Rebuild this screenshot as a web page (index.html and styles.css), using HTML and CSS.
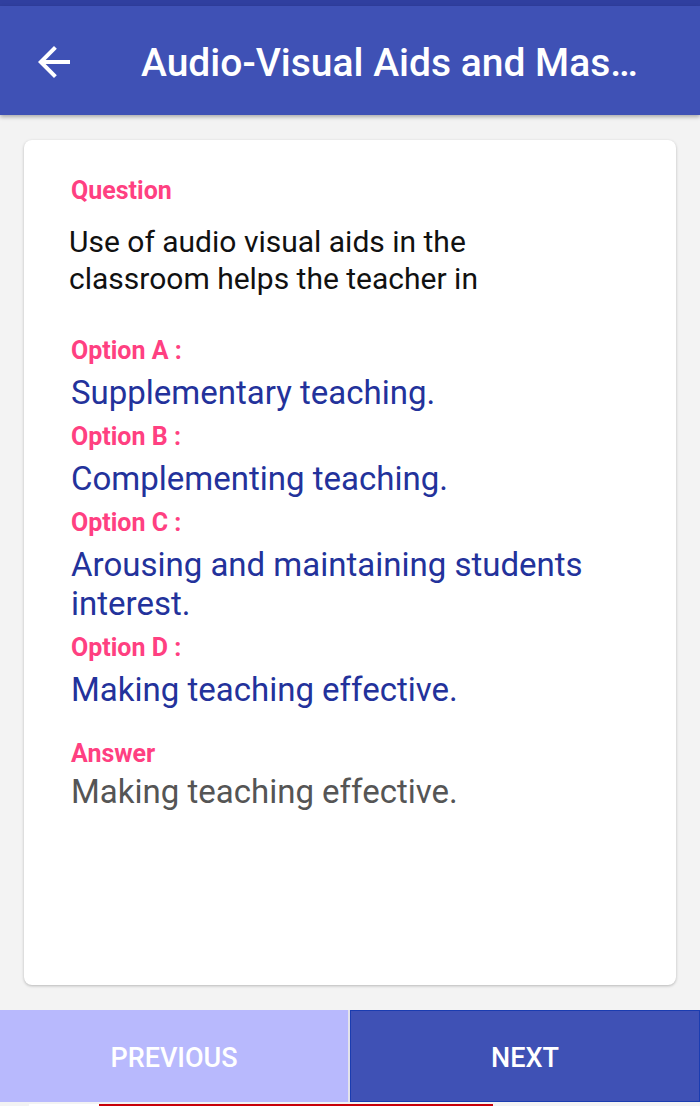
FILE: index.html
```html
<!DOCTYPE html>
<html>
<head>
  <meta charset="UTF-8">
  <title>Audio-Visual Aids and Mass Media</title>
  <link rel="stylesheet" href="styles.css">
</head>
<body>
  <div class="status-bar"></div>
  <div class="toolbar">
    <span class="back">
      <svg width="48" height="48" viewBox="0 0 24 24"><path fill="#fff" d="M20 11H7.83l5.59-5.59L12 4l-8 8 8 8 1.41-1.41L7.83 13H20v-2z"/></svg>
    </span>
    <span class="title">Audio-Visual Aids and Mas…</span>
  </div>

  <div class="card">
    <div class="label">Question</div>
    <div class="question">Use of audio visual aids in the classroom helps the teacher in</div>

    <div class="options">
      <div class="option">
        <div class="label">Option A :</div>
        <div class="option-text">Supplementary teaching.</div>
      </div>
      <div class="option">
        <div class="label">Option B :</div>
        <div class="option-text">Complementing teaching.</div>
      </div>
      <div class="option">
        <div class="label">Option C :</div>
        <div class="option-text">Arousing and maintaining students interest.</div>
      </div>
      <div class="option">
        <div class="label">Option D :</div>
        <div class="option-text">Making teaching effective.</div>
      </div>
    </div>

    <div class="answer">
      <div class="label">Answer</div>
      <div class="answer-text">Making teaching effective.</div>
    </div>
  </div>

  <div class="nav">
    <button class="prev">PREVIOUS</button>
    <button class="next">NEXT</button>
  </div>
  <div class="ad-strip">
    <span class="ad-white"></span>
    <span class="ad-red"></span>
  </div>
</body>
</html>
```

FILE: styles.css
```css
body {
  margin: 0;
  background-color: #f3f3f3;
  font-family: Roboto, "Noto Sans", sans-serif;
}
.status-bar {
  height: 6px;
  background-color: #303f9f;
}
.toolbar {
  height: 109px;
  background-color: #3f51b5;
  display: flex;
  align-items: center;
  box-shadow: 0 2px 4px rgba(0, 0, 0, 0.3);
  position: relative;
}
.back {
  display: flex;
  margin-left: 30px;
  margin-top: 3px;
}
.title {
  margin-left: 63px;
  margin-top: 5px;
  color: white;
  font-size: 39px;
  font-weight: 500;
  white-space: nowrap;
  overflow: hidden;
  text-overflow: ellipsis;
  max-width: 540px;
}
.card {
  margin: 25px 24px 0;
  height: 845px;
  box-sizing: border-box;
  padding: 36px 47px 0;
  background-color: white;
  border-radius: 8px;
  box-shadow: 0 1px 3px rgba(0, 0, 0, 0.25);
}
.label {
  color: #ff4081;
  font-size: 25px;
  font-weight: 700;
  line-height: 30px;
}
.question {
  margin-top: 17px;
  margin-left: -2px;
  color: #111;
  font-size: 30px;
  line-height: 37px;
  padding-right: 60px;
}
.options {
  margin-top: 39px;
  display: flex;
  flex-direction: column;
  gap: 10px;
}
.option-text {
  margin-top: 7px;
  color: #23329b;
  font-size: 33px;
  line-height: 39px;
}
.answer {
  margin-top: 30px;
}
.answer-text {
  margin-top: 3px;
  color: #555;
  font-size: 33px;
  line-height: 39px;
}
.nav {
  margin-top: 25px;
  display: flex;
  height: 92px;
}
.nav button {
  flex: 1;
  border: none;
  padding-top: 4px;
  font-family: Roboto, sans-serif;
  font-size: 27px;
  font-weight: 500;
  color: white;
  cursor: pointer;
}
.prev {
  background-color: #b8b9fd;
  border-right: 2px solid #e2e2ea !important;
}
.next {
  background-color: #3f51b5;
  border: 1px solid #1a3cb0 !important;
}
.ad-strip {
  height: 4px;
  display: flex;
  align-items: flex-end;
}
.ad-white {
  margin-left: 29px;
  width: 70px;
  height: 2px;
  background-color: white;
}
.ad-red {
  width: 394px;
  height: 2px;
  background-color: #c8000a;
}
```
